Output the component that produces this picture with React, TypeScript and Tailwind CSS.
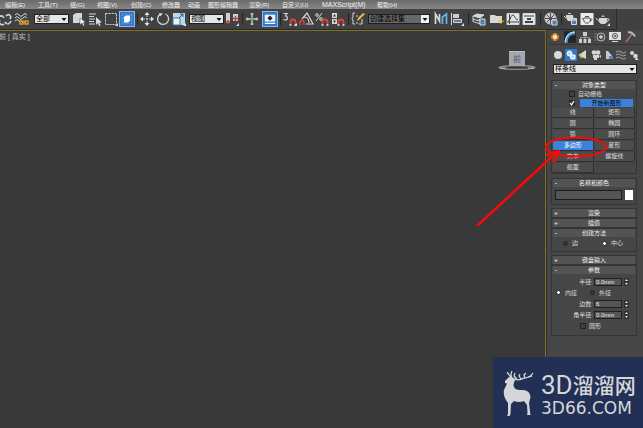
import clsx from "clsx";
import { ReactNode, useState } from "react";

const menus = [
  { label: "编辑(E)", width: "w-[33px]" },
  { label: "工具(T)", width: "w-8" },
  { label: "组(G)", width: "w-[27px]" },
  { label: "视图(V)", width: "w-[34px]" },
  { label: "创建(C)", width: "w-[31px]" },
  { label: "修改器", width: "w-[26px]" },
  { label: "动画", width: "w-5" },
  { label: "图形编辑器", width: "w-[41px]" },
  { label: "渲染(R)", width: "w-[33px]" },
  { label: "自定义(U)", width: "w-10" },
  { label: "MAXScript(M)", width: "w-[55px]" },
  { label: "帮助(H)", width: "w-10" },
];

const shapes = [
  "线",
  "矩形",
  "圆",
  "椭圆",
  "弧",
  "圆环",
  "多边形",
  "星形",
  "文本",
  "螺旋线",
  "截面",
];

const Tool = ({
  label,
  active,
  children,
}: {
  label: string;
  active?: boolean;
  children: ReactNode;
}) => (
  <button
    aria-label={label}
    className={clsx(
      "flex h-4 w-4 shrink-0 items-center justify-center",
      active && "border border-[#8db9ee] bg-[#2f78cf]",
    )}
  >
    <svg
      viewBox="0 0 16 16"
      className={clsx("shrink-0", active ? "h-3.5 w-3.5" : "h-4 w-4")}
      fill="none"
      stroke="#d6d6d6"
    >
      {children}
    </svg>
  </button>
);

const Separator = ({ wide }: { wide?: boolean }) => (
  <div
    className={clsx("flex h-3 shrink-0 justify-center", wide ? "w-1.5" : "w-1")}
  >
    <div className="w-px bg-[#242424]" />
  </div>
);

const Corner = () => <path d="M15 12v3h-3z" fill="#ddd" stroke="none" />;

const Magnet = () => (
  <g>
    <path d="M8.5 14V11a2.5 2.5 0 0 1 5 0v3" stroke="#d3463e" strokeWidth="1.8" />
    <path d="M7.6 14h1.8M12.6 14h1.8" stroke="#eee" strokeWidth="1.4" />
  </g>
);

const Teapot = () => (
  <g fill="#d6d6d6" stroke="none">
    <path d="M4 7h8c1 3-.5 5-2 6H6C4.500 12 3.200 10 4 7zM6 6c.5-1 3.500-1 4 0zM7.500 4h1v1h-1z" />
    <path d="M4.500 11C2.500 9.500 3 8 .8 7.500M12 8c3-1.500 3 2-.6 3" fill="none" stroke="#d6d6d6" />
  </g>
);

const Picker = ({
  label,
  options,
  className,
  dark,
}: {
  label: string;
  options: string[];
  className: string;
  dark?: boolean;
}) => (
  <div className={clsx("relative shrink-0", className)}>
    <select
      aria-label={label}
      className={clsx(
        "block h-2.5 w-full appearance-none border border-[#1f1f1f] pl-px text-[7px] leading-[8px] text-black",
        dark ? "bg-[#686868]" : "bg-[#e6e6e6]",
      )}
    >
      {options.map((o) => (
        <option key={o}>{o}</option>
      ))}
    </select>
    <svg
      viewBox="0 0 8 8"
      className={clsx(
        "pointer-events-none absolute top-px right-px h-2 w-2",
        dark && "bg-[#f2f2f2]",
      )}
    >
      <path d="M1.500 3h5L4 6z" fill="#111" />
    </svg>
  </div>
);

function MenuBar() {
  return (
    <nav className="flex h-[9px] overflow-hidden bg-linear-to-b from-[#6b6b6b] to-[#868686] pl-[5px]">
      {menus.map((m) => (
        <button
          key={m.label}
          className={clsx(
            "shrink-0 text-left leading-[8px] whitespace-nowrap text-[#f4f4f4]",
            m.label.startsWith("MAX") ? "text-[7px]" : "text-[6px]",
            m.width,
          )}
        >
          {m.label}
        </button>
      ))}
    </nav>
  );
}

function Toolbar() {
  return (
    <div className="flex h-[21px] w-fit items-center border-r border-b border-[#2a2a2a]">
      <div className="-ml-[3px] flex gap-px">
        <Tool label="断开链接">
          <path d="M1 8c1-4 5-4 6-1M9 5c3-3 6 0 4 3M3 9c-2 3 1 6 4 4M8 11c2 3 5 2 6-1" strokeWidth="1.6" />
          <path d="M5 4l2 2M9 11l3 3" stroke="#999" />
        </Tool>
        <Tool label="绑定到空间扭曲">
          <path d="M1 4q2-3 4 0t4 0 4 0M1 7q2-3 4 0t4 0 4 0M1 10q2-3 4 0t3 0" />
          <path d="M6 10h3v3H6zM11 10h3v3h-3zM8 11.500h4" stroke="#d99a26" strokeWidth="1.400" />
        </Tool>
      </div>
      <Picker label="选择过滤器" options={["全部"]} className="ml-1 w-[35px]" />
      <div className="ml-0.5 flex">
        <Tool label="选择对象">
          <path d="M2 4l3-2h6v8l-3 2H2z" fill="#d6d6d6" stroke="none" />
          <path d="M9 7v7l2-2 1 3 1.500-.5-1-3H15z" fill="#fff" stroke="#3a3a3a" strokeWidth=".5" />
        </Tool>
        <Tool label="按名称选择">
          <path d="M2 3h7M2 5.500h5M2 8h6M2 10.500h5M2 13h6" />
          <path d="M9 6v8l2-2 1 3 1.500-.5-1-3H15z" fill="#ddd" stroke="none" />
        </Tool>
        <Tool label="矩形选择区域">
          <path d="M2.500 2.500h11v11h-11z" strokeDasharray="2 1" />
          <Corner />
        </Tool>
        <Tool label="窗口/交叉" active>
          <path d="M2.500 2.500h11v11h-11z" stroke="#8fb8e8" strokeDasharray="1 1" />
          <path d="M4.500 6l2-2h5v6l-2 2h-5z" fill="#fff" stroke="none" />
        </Tool>
      </div>
      <Separator />
      <Tool label="选择并移动">
        <path d="M8 1l2.500 3h-5zM8 15l2.500-3h-5zM1 8l3-2.500v5zM15 8l-3-2.500v5z" fill="#e6e6e6" stroke="none" />
        <path d="M8 4v8M4 8h8" strokeDasharray="2 1" />
      </Tool>
      <Tool label="选择并旋转">
        <path d="M10.500 3A5.500 5.500 0 1 1 5 3.400" strokeWidth="1.300" />
        <path d="M4 2l4 .5-3 3z" fill="#ddd" stroke="none" />
      </Tool>
      <Tool label="选择并均匀缩放">
        <path d="M2 2h12v12H2z" fill="#b6d9ee" stroke="none" />
        <path d="M2 7h7v7H2z" fill="#e9f2f7" stroke="#477a9a" />
        <path d="M8 7l4-4M12 6V3H9" stroke="#225a88" />
        <Corner />
      </Tool>
      <Picker label="参考坐标系" options={["视图"]} className="ml-0.5 w-[35px]" />
      <Tool label="使用轴点中心">
        <path d="M2 2h4v10H2zM9 3h5v7H9z" fill="#cfcfcf" stroke="none" />
        <path d="M4 9v4M2 11h4M11.500 5v5M9 7.500h5" stroke="#c5403a" strokeWidth="1.500" />
        <Corner />
      </Tool>
      <Separator />
      <Tool label="选择并操纵">
        <path d="M8 2v12M2 8h12" strokeWidth="1.300" />
        <path d="M7 7h2v2H7z" fill="#61b957" stroke="#61b957" />
        <path d="M6.500 3h3M6.500 13h3M3 6.500v3M13 6.500v3" />
      </Tool>
      <div className="ml-0.5">
        <Tool label="键盘快捷键覆盖切换" active>
          <path d="M2 3h12v8H2z" fill="#f2f2f2" stroke="none" />
          <path d="M8 4l3 3-3 3-3-3z" fill="#222" stroke="none" />
          <path d="M2 13h12" stroke="#fff" strokeWidth="1.500" />
        </Tool>
      </div>
      <Separator />
      <Tool label="捕捉开关">
        <path d="M1.500 2.500h3.500L3.500 5C6 5 6 9 3.500 9L1.500 8.500" strokeWidth="1.200" />
        <Magnet />
        <Corner />
      </Tool>
      <Tool label="角度捕捉切换">
        <path d="M4 8L9 2l6 11H8M6 6c3 0 5 2 5 6" strokeWidth="1.200" />
        <path d="M2 14v-2.500a2 2 0 0 1 4 0V14" stroke="#d3463e" strokeWidth="1.600" />
      </Tool>
      <Tool label="百分比捕捉切换">
        <circle cx="3" cy="4" r="1.300" />
        <circle cx="7" cy="8" r="1.300" />
        <path d="M8 2L2 10" />
        <Magnet />
      </Tool>
      <Tool label="微调器捕捉切换">
        <path d="M2 2h5v5H2zM2 8h5v5H2z" fill="#d6d6d6" stroke="none" />
        <path d="M4.500 3L6 5.500H3zM4.500 12L6 9.500H3z" fill="#333" stroke="none" />
        <Magnet />
      </Tool>
      <Separator />
      <Tool label="编辑命名选择集">
        <path d="M5 2H3v4L2 7.500 3 9v4h2M9 13h3V8" />
        <path d="M7 10l1-3 5-5 2 1-6 6z" fill="#e7bd45" stroke="none" />
        <path d="M6 5h2M6 12h2" />
      </Tool>
      <Picker label="命名选择集" options={["创建选择集"]} className="ml-0.5 w-[62px]" dark />
      <div className="ml-[3px] flex">
        <Tool label="镜像">
          <path d="M2.500 13V3l4 7V3" strokeWidth="1.700" />
          <path d="M9.500 13V6l4-3v10" stroke="#68b5e8" strokeWidth="1.700" />
        </Tool>
        <Tool label="对齐">
          <path d="M2.500 2v12" />
          <path d="M4 3h6v4H4z" fill="#ccc" stroke="none" />
          <path d="M4.500 8.500h8v3h-8z" fill="#5a7ba5" />
          <Corner />
        </Tool>
      </div>
      <Separator wide />
      <Tool label="层管理器">
        <path d="M2 5l4-2 7 1-4 3zM2 8l6 2 4-2M2 10.500l6 2 2-1M2 5v6" fill="#d6d6d6" />
        <path d="M3 7.500l5 1.500M3 10l5 1.500" stroke="#555" />
        <path d="M9 8h5v6H9z" fill="#517eb3" />
      </Tool>
      <div className="ml-0.5 flex">
        <Tool label="功能区">
          <path d="M1 4h5l1 1h6v7H1z" fill="#d6d6d6" stroke="none" />
          <path d="M12 7l1 2.500 2.500.5-2.500 1-1 2.500-1-2.500-2.500-1 2.500-.5z" fill="#f2c54d" stroke="none" />
        </Tool>
        <Tool label="曲线编辑器">
          <path d="M2 2.500h12v11H2z" fill="#e4e4e4" />
          <path d="M4.500 3v10M2 11h12M3 10c3 0 2-6 5-6 2 0 2 5 5 5" stroke="#444" />
        </Tool>
        <Tool label="图解视图">
          <path d="M2 2.500h12v11H2z" fill="#e4e4e4" />
          <path d="M3 5h10M5 11h6" stroke="#444" />
          <path d="M6 7h4v2H6zM4 10h8v2H4z" fill="#444" stroke="none" />
        </Tool>
      </div>
      <Separator wide />
      <Tool label="材质编辑器">
        <circle cx="7.500" cy="7.500" r="5.500" fill="#c9c9c9" />
        <path d="M4 4l7 7M11 4l-7 7M7.500 2v11M2 7.500h11" stroke="#505050" />
        <path d="M9 9h5v5H9z" fill="#517eb3" />
      </Tool>
      <Separator />
      <Tool label="渲染设置">
        <path d="M3 4h7c1 3 0 5-2 6H5C3 8 3 6 3 4zM5 2h3v1H5z" fill="#d6d6d6" stroke="none" />
        <path d="M3 7L1 5" />
        <path d="M8.500 7.500h5v6h-5z" fill="#517eb3" />
        <path d="M9 9h4" stroke="#fff" />
      </Tool>
      <Tool label="渲染帧窗口">
        <path d="M1.500 2h13v12h-13z" fill="#ececec" stroke="none" />
        <path d="M5 7h6c1 2 0 4-1.500 5h-3C5 11 4 9 5 7zM6 5.500h4M5 9L3 7M11 8c3-.5 2 2 0 2" stroke="#555" />
      </Tool>
      <div className="mr-[5px]">
        <Tool label="渲染产品">
          <Teapot />
          <Corner />
        </Tool>
      </div>
    </div>
  );
}

function Viewport() {
  return (
    <main className="flex min-w-0 flex-1 justify-between border-t border-r border-[#80702c] bg-[#393939]">
      <div className="-ml-px pt-px text-[7px] leading-[9px] whitespace-pre text-[#c4c4c4]">
        前 [ 真实 ]
      </div>
      <svg viewBox="0 0 40 22" className="mt-[19px] mr-2 h-[22px] w-10 shrink-0">
        <ellipse cx="20" cy="17.500" rx="18" ry="1.800" fill="none" stroke="#8e9294" strokeWidth="1.300" />
        <path d="M3 18h6M31 18h6" stroke="#c7cacc" />
        <path d="M12 1h16v15H12z" fill="#a2a8b0" />
        <path d="M12 1h16v1H12z" fill="#bcc1c7" />
        <text x="20" y="12" textAnchor="middle" fontSize="8" fill="#4e5661">
          前
        </text>
      </svg>
    </main>
  );
}

const CommandTabs = () => (
  <div className="flex h-[15px] items-center gap-[3px] border-b border-[#353535]">
    <button aria-label="创建" className="h-3 w-3">
      <svg viewBox="0 0 12 12">
        <circle cx="6" cy="6" r="4" fill="#a8602a" />
        <path d="M6 2v8M2 6h8" stroke="#de8c35" strokeWidth="1.500" />
        <circle cx="6" cy="6" r="2.400" fill="#ffe09a" />
      </svg>
    </button>
    <button aria-label="修改" className="h-3 w-3 bg-[#262626]">
      <svg viewBox="0 0 12 12" fill="none">
        <path d="M2 12C2 6 5 2 11 2" stroke="#4c9bd8" strokeWidth="3" />
        <path d="M1 11C2 5 5 1 11 1" stroke="#dcecf5" />
      </svg>
    </button>
    <button aria-label="层次" className="h-3 w-3">
      <svg viewBox="0 0 12 12" fill="#ccc">
        <path d="M4 1h4v4H4zM0 8h3v4H0zM4.500 8h3v4h-3zM9 8h3v4H9z" />
        <path d="M6 5v3M1.500 8V6.500h9V8" fill="none" stroke="#999" />
      </svg>
    </button>
    <button aria-label="运动" className="h-3 w-3">
      <svg viewBox="0 0 12 12" fill="none" stroke="#b5b5b5">
        <circle cx="7" cy="6" r="4" />
        <circle cx="7" cy="6" r="1.500" fill="#ccc" />
        <path d="M0 3h3M0 6h2M0 9h3" stroke="#777" />
      </svg>
    </button>
    <button aria-label="显示" className="h-3 w-3">
      <svg viewBox="0 0 12 12" fill="none">
        <path d="M0 1h12v8H0zM3 10h6v1H3z" fill="#dedede" />
        <circle cx="6" cy="5" r="2.500" stroke="#555" />
        <circle cx="6" cy="5" r="1" fill="#555" />
      </svg>
    </button>
    <button aria-label="实用程序" className="h-3 w-3">
      <svg viewBox="0 0 12 12" fill="none">
        <path d="M2 11l6-8" stroke="#a77168" strokeWidth="1.600" />
        <path d="M4 1.500c3-1 5 .5 7 4" stroke="#b9b9b9" strokeWidth="2" />
      </svg>
    </button>
  </div>
);

const CategoryButtons = () => (
  <div className="flex h-5 items-center justify-between pr-[3px] pl-[3px]">
    <button aria-label="几何体" className="h-3 w-3">
      <svg viewBox="0 0 12 12">
        <circle cx="6" cy="6" r="4" fill="#d9d9d9" />
      </svg>
    </button>
    <button aria-label="图形" className="h-3 w-3 bg-[#2f78cf]">
      <svg viewBox="0 0 12 12" fill="#c3d7ed" stroke="#fff">
        <circle cx="4.500" cy="4.500" r="2.500" />
        <path d="M5 6h5v4H6z" />
      </svg>
    </button>
    <button aria-label="灯光" className="h-3 w-3">
      <svg viewBox="0 0 12 12">
        <path d="M9 1v9L3 7V5z" fill="#d8d8c6" />
        <path d="M2 5l3 4" stroke="#b7b866" strokeWidth="2" />
      </svg>
    </button>
    <button aria-label="摄影机" className="h-3 w-3">
      <svg viewBox="0 0 12 12" fill="#d6d6d6">
        <circle cx="4" cy="3.500" r="2.300" />
        <circle cx="8" cy="3.500" r="2.300" />
        <path d="M3 6h6v3H3zM9 7l2-1v3zM4 9h3v2H4z" />
      </svg>
    </button>
    <button aria-label="辅助对象" className="h-3 w-3">
      <svg viewBox="0 0 12 12">
        <path d="M3 2h2l5 6v2H3z" fill="#c9c9c9" />
        <path d="M6 7h4v3H6z" fill="#5884b1" />
      </svg>
    </button>
    <button aria-label="空间扭曲" className="h-3 w-3">
      <svg viewBox="0 0 12 12" fill="none" stroke="#a5a5a5">
        <path d="M1 3q2.500-2 5 0t5 0M1 6q2.500-2 5 0t5 0M1 9q2.500-2 5 0t5 0" />
      </svg>
    </button>
    <button aria-label="系统" className="h-3 w-3">
      <svg viewBox="0 0 12 12" fill="#d6d6d6">
        <circle cx="4" cy="4" r="2" />
        <circle cx="7.500" cy="7" r="2.300" />
        <path d="M8 8l3 3H7z" />
      </svg>
    </button>
  </div>
);

function Rollout({
  title,
  open,
  children,
}: {
  title: string;
  open?: boolean;
  children?: ReactNode;
}) {
  return (
    <section className="border border-[#353535] px-px">
      <button
        aria-expanded={!!open}
        className="flex h-2 w-full items-center bg-[#535353] text-[6px] leading-[8px] text-[#efefef]"
      >
        <span className="w-1.5 font-bold">{open ? "-" : "+"}</span>
        <span className="flex-1 pr-1.5 text-center">{title}</span>
      </button>
      {children}
    </section>
  );
}

const Check = ({
  label,
  hideLabel,
  defaultChecked,
}: {
  label: string;
  hideLabel?: boolean;
  defaultChecked?: boolean;
}) => {
  const [on, setOn] = useState(!!defaultChecked);
  return (
    <label className="flex items-center gap-[3px]">
      <span className="relative h-1.5 w-1.5">
        <input
          type="checkbox"
          aria-label={label}
          checked={on}
          onChange={() => setOn(!on)}
          className="block h-1.5 w-1.5 appearance-none border border-[#232323] bg-[#424242]"
        />
        {on && (
          <svg viewBox="0 0 6 6" className="pointer-events-none absolute inset-0" fill="none">
            <path d="M1 3l1.500 2L5 1" stroke="#fff" strokeWidth="1.200" />
          </svg>
        )}
      </span>
      {!hideLabel && label}
    </label>
  );
};

const Radio = ({
  name,
  label,
  defaultChecked,
}: {
  name: string;
  label: string;
  defaultChecked?: boolean;
}) => (
  <label className="flex items-center gap-1">
    <input
      type="radio"
      name={name}
      defaultChecked={defaultChecked}
      className="h-[5px] w-[5px] appearance-none rounded-full border border-[#222] bg-[#3a3a3a] checked:bg-white"
    />
    {label}
  </label>
);

const Spinner = ({ label, value }: { label: string; value: string }) => (
  <div className="flex h-[11px] items-center justify-end pr-1.5">
    <label className="flex items-center gap-px">
      {label}:
      <input
        defaultValue={value}
        className="h-2 w-7 border border-[#202020] bg-[#555] pl-px text-[6px] leading-[6px] text-[#eee]"
      />
    </label>
    <svg viewBox="0 0 5 8" className="ml-0.5 h-2 w-[5px] bg-[#333]">
      <path d="M1 3l1.500-2L4 3zM1 5l1.500 2L4 5z" fill="#ddd" />
    </svg>
  </div>
);

function CommandPanel() {
  const [shape, setShape] = useState("多边形");
  return (
    <aside className="relative w-[97px] shrink-0 border-l border-[#303030] bg-[#464646] pl-0.5 text-[6px] leading-[8px] text-[#dcdcdc]">
      <CommandTabs />
      <CategoryButtons />
      <Picker label="类别" options={["样条线"]} className="mt-[-1px] mr-1.5 ml-1 w-[84px]" />
      <div className="mt-1.5 mr-1.5 ml-0.5 flex flex-col">
        <Rollout title="对象类型" open>
          <div className="flex h-[9px] items-center pl-4">
            <Check label="自动栅格" />
          </div>
          <div className="flex h-[9px] items-center gap-[5px] pl-4">
            <Check label="启用" hideLabel defaultChecked />
            <button className="mr-0.5 h-2 flex-1 bg-[#3a82dc] leading-[8px] text-black">
              开始新图形
            </button>
          </div>
          <div className="grid grid-cols-2 gap-px pt-px">
            {shapes.map((s) => (
              <button
                key={s}
                onClick={() => setShape(s)}
                className={clsx(
                  "h-2.5 border-r border-b border-[#303030] leading-[9px]",
                  s === shape ? "bg-[#3a82dc] text-white" : "bg-[#4c4c4c]",
                )}
              >
                {s}
              </button>
            ))}
          </div>
        </Rollout>
        <div className="mt-1">
          <Rollout title="名称和颜色" open>
            <div className="flex items-center gap-[3px] px-0.5 pt-[3px] pb-1">
              <input
                aria-label="名称"
                className="h-2.5 min-w-0 flex-1 border border-[#1c1c1c] bg-[#555]"
              />
              <button aria-label="颜色" className="h-2.5 w-2 bg-white" />
            </div>
          </Rollout>
        </div>
        <div className="mt-[3px] flex flex-col">
          <Rollout title="渲染" />
          <Rollout title="插值" />
          <Rollout title="创建方法" open>
            <div className="flex items-center gap-6 pt-0.5 pb-1 pl-2.5">
              <Radio name="method" label="边" />
              <Radio name="method" label="中心" defaultChecked />
            </div>
          </Rollout>
        </div>
        <div className="mt-[3px] flex flex-col">
          <Rollout title="键盘输入" />
          <Rollout title="参数" open>
            <div className="h-0.5" />
            <Spinner label="半径" value="0.0mm" />
            <div className="flex h-[11px] items-center gap-[13px] pl-[3px]">
              <Radio name="fit" label="内接" defaultChecked />
              <Radio name="fit" label="外接" />
            </div>
            <Spinner label="边数" value="6" />
            <Spinner label="角半径" value="0.0mm" />
            <div className="flex h-[15px] items-start pt-0.5 pl-[27px]">
              <Check label="圆形" />
            </div>
          </Rollout>
        </div>
      </div>
      <svg
        viewBox="0 0 136 96"
        className="pointer-events-none absolute top-[104px] right-[34px] h-24 w-[136px]"
        fill="none"
        stroke="#f50a0a"
        strokeWidth="2"
      >
        <ellipse cx="103" cy="13" rx="30" ry="9.500" />
        <path d="M5 91L84 18" strokeWidth="2.500" strokeLinecap="round" />
        <path d="M74 21l12-4-5 11" strokeWidth="2.500" strokeLinecap="round" strokeLinejoin="round" />
      </svg>
    </aside>
  );
}

const Badge = () => (
  <div className="absolute right-0 bottom-0 flex h-[71px] w-[150px] items-center gap-1.5 bg-[#223056] pl-2 text-[#d5d6d8]">
    <svg viewBox="0 0 34 46" className="h-[46px] w-[34px] shrink-0" fill="#d5d6d8">
      <path d="M4 11l4-4 4 1 2 2.500-1.500 3.500c0 5 3 6 8 6 6 0 8.500 2.500 9 7l-1.500 6 1.500 12H26l.5-2-.5-8-3-4c-4 1.500-7 1-10 0l-3 3-.5 10-1 2H6l1-2V33C4 29 2 25 3 20l3-6.500-2-.5z" />
      <path
        d="M10 8C9 5 7 5 6.500 2M11 8c-2-3-1-5 0-7M8 4L6 3M11 8c5 3 9 2 12 0 4 0 7-2 9-5M16 9l-3-3 1-3M20 9l-2-3 1-2M24 8l-1-3 2-2M27 7l4-1"
        fill="none"
        stroke="#d5d6d8"
        strokeWidth="1.300"
      />
    </svg>
    <div className="pt-1 whitespace-nowrap">
      <div className="flex h-[27px] items-center leading-[27px]">
        <span className="font-['Roboto',sans-serif] text-[26px]">3D</span>
        <span className="text-[21px] font-medium">溜溜网</span>
      </div>
      <div className="font-['DejaVu_Sans',sans-serif] text-[17px] leading-[18px]">3D66.COM</div>
    </div>
  </div>
);

export default function App() {
  return (
    <div className="relative flex min-h-screen flex-col overflow-hidden bg-[#414141] font-['Liberation_Sans','Noto_Sans_CJK_SC',sans-serif]">
      <MenuBar />
      <Toolbar />
      <div className="flex flex-1">
        <Viewport />
        <CommandPanel />
      </div>
      <Badge />
    </div>
  );
}
